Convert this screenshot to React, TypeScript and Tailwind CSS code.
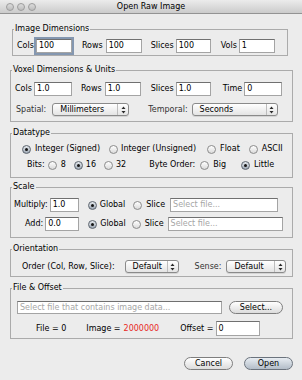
import React from "react";

function TextField({
  w,
  value,
  placeholder,
  focus,
  className = "",
}: {
  w: string;
  value?: string;
  placeholder?: string;
  focus?: boolean;
  className?: string;
}) {
  return (
    <div
      className={`${w} h-[14px] shrink-0 bg-white border border-[#a4a4a4] border-t-[#707070] flex items-center pl-[2px] leading-none ${
        focus ? "shadow-[0_0_0_2px_#8497b0]" : ""
      } ${className}`}
    >
      {value ? (
        <span className="text-black">{value}</span>
      ) : (
        <span className="text-[#a6a6a6]">{placeholder}</span>
      )}
    </div>
  );
}

function Radio({ checked, className = "" }: { checked?: boolean; className?: string }) {
  return (
    <span
      className={`w-[9px] h-[9px] shrink-0 rounded-full border flex items-center justify-center ${
        checked
          ? "border-[#5d656f] bg-linear-to-b from-[#e6eaee] to-[#9ea8b4]"
          : "border-[#8b8b8b] bg-linear-to-b from-white to-[#dadada]"
      } ${className}`}
    >
      {checked && <span className="w-[3px] h-[3px] rounded-full bg-[#151515]" />}
    </span>
  );
}

function Popup({ w, label, className = "" }: { w: string; label: string; className?: string }) {
  return (
    <div
      className={`${w} h-[13px] shrink-0 rounded-[3px] border border-[#8a8a8a] bg-linear-to-b from-white to-[#e4e4e4] flex items-center shadow-[0_1px_0_rgba(0,0,0,0.1)] ${className}`}
    >
      <span className="flex-1 pl-[7px] leading-none">{label}</span>
      <span className="w-[11px] h-full border-l border-[#bdbdbd] flex items-center justify-center">
        <svg width="5" height="8" viewBox="0 0 5 8">
          <path d="M2.5 0.5 L4.5 3 H0.5 Z M2.5 7.5 L4.5 5 H0.5 Z" fill="#2a2a2a" />
        </svg>
      </span>
    </div>
  );
}

function Pill({
  w,
  label,
  primary,
  className = "",
}: {
  w: string;
  label: string;
  primary?: boolean;
  className?: string;
}) {
  return (
    <div
      className={`${w} h-[13px] shrink-0 rounded-full border flex items-center justify-center leading-none ${
        primary
          ? "border-[#6b737d] bg-linear-to-b from-[#e8edf2] to-[#b3bdc8]"
          : "border-[#7e7e7e] bg-linear-to-b from-white to-[#dcdcdc]"
      } ${className}`}
    >
      {label}
    </div>
  );
}

function Group({
  title,
  className = "",
  children,
}: {
  title: string;
  className?: string;
  children: React.ReactNode;
}) {
  return (
    <div className={`border border-[#ababab] shrink-0 ${className}`}>
      <div className="-mt-[6px] ml-[1px] px-[1px] w-fit h-[10px] leading-[10px] bg-[#ececec]">
        {title}
      </div>
      {children}
    </div>
  );
}

function Light() {
  return (
    <span className="w-[8px] h-[8px] rounded-full border border-[#9c9c9c] bg-linear-to-b from-[#dcdcdc] to-[#bdbdbd]" />
  );
}

export default function App() {
  return (
    <div className="w-[302px] h-[380px] overflow-hidden bg-[#ececec] text-[8px] leading-[10px] text-black font-['DejaVu_Sans',sans-serif] flex flex-col">
      {/* Title bar */}
      <div className="h-[14px] shrink-0 border-b border-[#939393] bg-linear-to-b from-[#ececec] to-[#cbcbcb] grid grid-cols-[1fr_auto_1fr] items-center">
        <div className="flex items-center gap-[3px] pl-[6px]">
          <Light />
          <Light />
          <Light />
        </div>
        <div className="leading-none">Open Raw Image</div>
        <div />
      </div>

      {/* Image Dimensions */}
      <Group title="Image Dimensions" className="mt-[15px] ml-[12px] w-[276px] pb-[2px]">
        <div className="mt-[5px] h-[14px] flex items-center">
          <span className="ml-[4px]">Cols</span>
          <TextField w="w-[36px]" value="100" focus className="ml-[2px]" />
          <span className="ml-[10px]">Rows</span>
          <TextField w="w-[36px]" value="100" className="ml-[3px]" />
          <span className="ml-[9px]">Slices</span>
          <TextField w="w-[35px]" value="100" className="ml-[2px]" />
          <span className="ml-[10px]">Vols</span>
          <TextField w="w-[36px]" value="1" className="ml-[2px]" />
        </div>
      </Group>

      {/* Voxel Dimensions & Units */}
      <Group title="Voxel Dimensions & Units" className="mt-[14px] ml-[10px] w-[283px] pb-[5px]">
        <div className="mt-[7px] h-[14px] flex items-center">
          <span className="ml-[4px]">Cols</span>
          <TextField w="w-[38px]" value="1.0" className="ml-[2px]" />
          <span className="ml-[9px]">Rows</span>
          <TextField w="w-[36px]" value="1.0" className="ml-[3px]" />
          <span className="ml-[10px]">Slices</span>
          <TextField w="w-[35px]" value="1.0" className="ml-[2px]" />
          <span className="ml-[12px]">Time</span>
          <TextField w="w-[38px]" value="0" className="ml-[2px]" />
        </div>
        <div className="mt-[7px] h-[13px] flex items-center">
          <span className="ml-[5px] text-[#333]">Spatial:</span>
          <Popup w="w-[77px]" label="Millimeters" className="ml-[6px]" />
          <span className="ml-[19px] text-[#333]">Temporal:</span>
          <Popup w="w-[86px]" label="Seconds" className="ml-[4px]" />
        </div>
      </Group>

      {/* Datatype */}
      <Group title="Datatype" className="mt-[11px] ml-[10px] w-[283px] pb-[6px]">
        <div className="mt-[5px] h-[12px] flex items-center">
          <Radio checked className="ml-[11px]" />
          <span className="ml-[4px]">Integer (Signed)</span>
          <Radio className="ml-[9px]" />
          <span className="ml-[3px]">Integer (Unsigned)</span>
          <Radio className="ml-[11px]" />
          <span className="ml-[4px]">Float</span>
          <Radio className="ml-[9px]" />
          <span className="ml-[4px]">ASCII</span>
        </div>
        <div className="mt-[4px] h-[12px] flex items-center">
          <span className="ml-[16px]">Bits:</span>
          <Radio className="ml-[3px]" />
          <span className="ml-[4px]">8</span>
          <Radio checked className="ml-[8px]" />
          <span className="ml-[3px]">16</span>
          <Radio className="ml-[8px]" />
          <span className="ml-[3px]">32</span>
          <span className="ml-[23px]">Byte Order:</span>
          <Radio className="ml-[5px]" />
          <span className="ml-[4px]">Big</span>
          <Radio checked className="ml-[15px]" />
          <span className="ml-[4px]">Little</span>
        </div>
      </Group>

      {/* Scale */}
      <Group title="Scale" className="mt-[9px] ml-[10px] w-[283px] pb-[6px]">
        <div className="mt-[6px] h-[14px] flex items-center">
          <span className="ml-[3px]">Multiply:</span>
          <TextField w="w-[29px]" value="1.0" className="ml-[2px]" />
          <Radio checked className="ml-[9px]" />
          <span className="ml-[3px]">Global</span>
          <Radio className="ml-[8px]" />
          <span className="ml-[4px]">Slice</span>
          <TextField w="w-[108px]" placeholder="Select file..." className="ml-[5px]" />
        </div>
        <div className="mt-[5px] h-[14px] flex items-center">
          <span className="ml-[14px]">Add:</span>
          <TextField w="w-[34px]" value="0.0" className="ml-[2px]" />
          <Radio checked className="ml-[9px]" />
          <span className="ml-[3px]">Global</span>
          <Radio className="ml-[6px]" />
          <span className="ml-[4px]">Slice</span>
          <TextField w="w-[115px]" placeholder="Select file..." className="ml-[4px]" />
        </div>
      </Group>

      {/* Orientation */}
      <Group title="Orientation" className="mt-[11px] ml-[10px] w-[283px] pb-[3px]">
        <div className="mt-[6px] h-[13px] flex items-center">
          <span className="ml-[11px]">Order (Col, Row, Slice):</span>
          <Popup w="w-[54px]" label="Default" className="ml-[10px]" />
          <span className="ml-[16px] text-[#333]">Sense:</span>
          <Popup w="w-[60px]" label="Default" className="ml-[5px]" />
        </div>
      </Group>

      {/* File & Offset */}
      <Group title="File & Offset" className="mt-[11px] ml-[10px] w-[283px] pb-[2px]">
        <div className="mt-[8px] h-[13px] flex items-center">
          <TextField
            w="w-[205px]"
            placeholder="Select file that contains image data..."
            className="ml-[6px] !h-[13px]"
          />
          <Pill w="w-[54px]" label="Select..." className="ml-[7px]" />
        </div>
        <div className="mt-[7px] h-[15px] flex items-center">
          <span className="ml-[25px]">File = 0</span>
          <span className="ml-[20px]">Image = </span>
          <span className="ml-[3px] text-[#e8281e]">2000000</span>
          <span className="ml-[21px]">Offset =</span>
          <TextField w="w-[44px]" value="0" className="ml-[2px] !h-[15px]" />
        </div>
      </Group>

      {/* Buttons */}
      <div className="mt-[18px] flex justify-end pr-[9px] gap-[11px]">
        <Pill w="w-[49px]" label="Cancel" />
        <Pill w="w-[49px]" label="Open" primary />
      </div>
    </div>
  );
}
